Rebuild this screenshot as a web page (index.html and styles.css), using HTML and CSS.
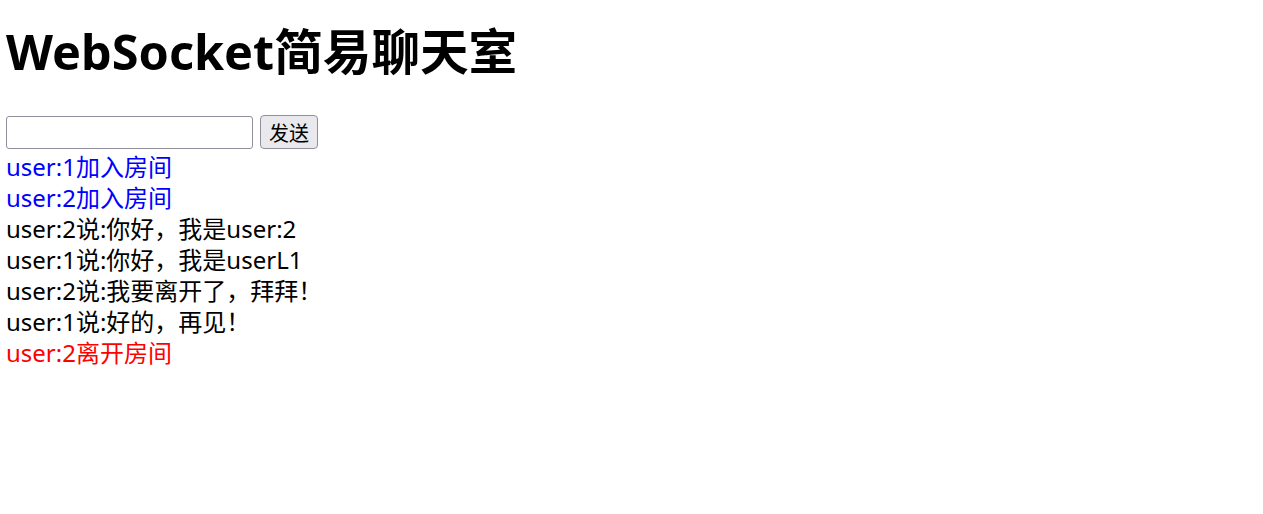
FILE: index.html
```html
<!DOCTYPE html>
<html lang="zh-CN">
<head>
<meta charset="utf-8">
<title>WebSocket简易聊天室</title>
<link rel="stylesheet" href="styles.css">
</head>
<body>
<h1 class="title">WebSocket简易聊天室</h1>
<div class="composer">
  <input class="msg-input" type="text">
  <button class="send-btn" type="button">发送</button>
</div>
<div class="log">
  <div class="line join">user:1加入房间</div>
  <div class="line join">user:2加入房间</div>
  <div class="line">user:2说:你好，我是user:2</div>
  <div class="line">user:1说:你好，我是userL1</div>
  <div class="line">user:2说:我要离开了，拜拜！</div>
  <div class="line">user:1说:好的，再见！</div>
  <div class="line leave">user:2离开房间</div>
</div>
</body>
</html>
```

FILE: styles.css
```css
html, body {
  background: #fff;
}
body {
  margin: 0;
  padding: 0 6px;
  font-family: "Noto Sans", "Noto Sans CJK SC", sans-serif;
  color: #000;
}
.title {
  margin: 0;
  padding-top: 19px;
  height: 92px;
  box-sizing: border-box;
  font-size: 48.6px;
  line-height: 64px;
  font-weight: bold;
}
.composer {
  display: flex;
  align-items: center;
  gap: 7px;
  height: 36px;
  margin-top: 22px;
}
.msg-input {
  width: 247px;
  height: 33px;
  box-sizing: border-box;
  border: 1px solid #8f8f9d;
  border-radius: 3px;
  margin: 0;
  font-size: 20px;
}
.send-btn {
  width: 58px;
  height: 34px;
  box-sizing: border-box;
  border: 1px solid #8f8f9d;
  border-radius: 4px;
  background: #e9e9ed;
  margin: 0;
  padding: 0;
  font-family: "Noto Sans CJK SC", sans-serif;
  font-size: 20px;
  color: #000;
}
.log {
  font-size: 24px;
  line-height: 31px;
  margin-top: 1px;
}
.line {
  white-space: nowrap;
}
.join {
  color: #0000ff;
}
.leave {
  color: #ff0000;
}
```
